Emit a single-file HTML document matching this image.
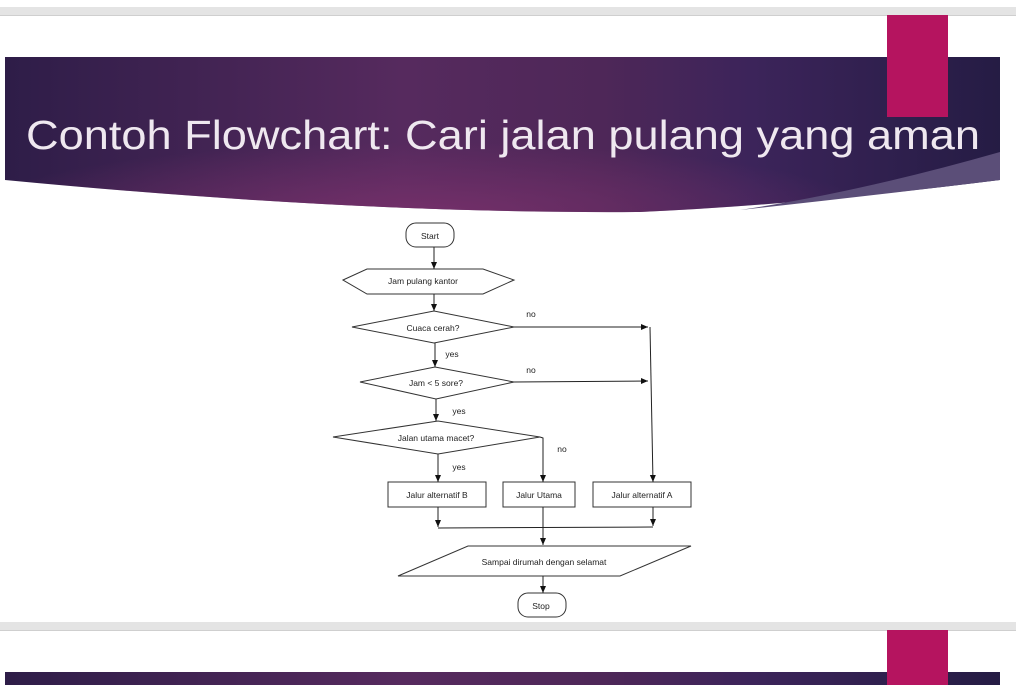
<!DOCTYPE html>
<html><head><meta charset="utf-8"><style>
html,body{margin:0;padding:0;background:#fff;width:1016px;height:685px;overflow:hidden}
svg{display:block}
</style></head><body>
<svg width="1016" height="685" viewBox="0 0 1016 685" xmlns="http://www.w3.org/2000/svg" font-family="'Liberation Sans', sans-serif">
<defs>
<linearGradient id="g1" x1="0" y1="0" x2="1" y2="0">
<stop offset="0" stop-color="#2e1d48"/>
<stop offset="0.4" stop-color="#562a5e"/>
<stop offset="0.6" stop-color="#4e2758"/>
<stop offset="0.75" stop-color="#3c245a"/>
<stop offset="1" stop-color="#251c44"/>
</linearGradient>
<radialGradient id="g2" cx="0.42" cy="1.0" r="0.45">
<stop offset="0" stop-color="#76306a" stop-opacity="0.9"/>
<stop offset="1" stop-color="#76306a" stop-opacity="0"/>
</radialGradient>
<marker id="ar" markerWidth="8" markerHeight="8" refX="7" refY="4" orient="auto" markerUnits="userSpaceOnUse">
<path d="M0,1 L7,4 L0,7 Z" fill="#111"/>
</marker>
</defs>
<rect x="0" y="7" width="1016" height="8" fill="#e4e4e4"/>
<rect x="0" y="15" width="1016" height="1" fill="#cfcfcf"/>
<path d="M5,57 L1000,57 L1000,180 Q800,205 640,212 Q360,214 5,180 Z" fill="url(#g1)"/>
<path d="M5,57 L1000,57 L1000,180 Q800,205 640,212 Q360,214 5,180 Z" fill="url(#g2)"/>
<path d="M1000,152 Q860,192 740,210 Q870,196 1000,180 Z" fill="#5b4e78"/>
<rect x="887" y="15" width="61" height="102" fill="#b5145f"/>
<text x="26" y="149" font-size="41" font-weight="300" fill="#efe8f0" textLength="954" lengthAdjust="spacingAndGlyphs">Contoh Flowchart: Cari jalan pulang yang aman</text>
<g stroke="#333" stroke-width="1" fill="#fff">
<rect x="406" y="223" width="48" height="24" rx="10"/>
<polygon points="343,280 367,269 483,269 514,280 483,294 367,294"/>
<polygon points="352,327 434,311 514,327 434,343"/>
<polygon points="360,382 435,367 514,382 436,399"/>
<polygon points="333,437 438,421 540,437 438,454"/>
<rect x="388" y="482" width="98" height="25"/>
<rect x="503" y="482" width="72" height="25"/>
<rect x="593" y="482" width="98" height="25"/>
<polygon points="468,546 691,546 620,576 398,576"/>
<rect x="518" y="593" width="48" height="24" rx="10"/>
</g>
<g stroke="#222" stroke-width="1" fill="none" marker-end="url(#ar)">
<line x1="434" y1="247" x2="434" y2="269"/>
<line x1="434" y1="294" x2="434" y2="311"/>
<line x1="514" y1="327" x2="648" y2="327"/>
<line x1="514" y1="382" x2="648" y2="381"/>
<line x1="435" y1="343" x2="435" y2="367"/>
<line x1="436" y1="399" x2="436" y2="421"/>
<line x1="650" y1="327" x2="653" y2="482"/>
<line x1="438" y1="454" x2="438" y2="482"/>
<polyline points="540,437 543,438 543,482"/>
<line x1="438" y1="507" x2="438" y2="527"/>
<line x1="653" y1="507" x2="653" y2="526"/>
<line x1="543" y1="507" x2="543" y2="545"/>
<line x1="543" y1="576" x2="543" y2="593"/>
</g>
<line x1="438" y1="528" x2="653" y2="527" stroke="#222"/>
<g font-size="8.5" fill="#222" text-anchor="middle">
<text x="430" y="239">Start</text>
<text x="423" y="284">Jam pulang kantor</text>
<text x="433" y="331">Cuaca cerah?</text>
<text x="436" y="386">Jam &lt; 5 sore?</text>
<text x="436" y="441">Jalan utama macet?</text>
<text x="437" y="498">Jalur alternatif B</text>
<text x="539" y="498">Jalur Utama</text>
<text x="642" y="498">Jalur alternatif A</text>
<text x="544" y="565">Sampai dirumah dengan selamat</text>
<text x="541" y="609">Stop</text>
<text x="531" y="317">no</text>
<text x="531" y="373">no</text>
<text x="562" y="452">no</text>
<text x="452" y="357">yes</text>
<text x="459" y="414">yes</text>
<text x="459" y="470">yes</text>
</g>
<rect x="0" y="622" width="1016" height="8" fill="#e4e4e4"/>
<rect x="0" y="630" width="1016" height="1" fill="#cfcfcf"/>
<rect x="5" y="672" width="995" height="13" fill="url(#g1)"/>
<rect x="887" y="630" width="61" height="55" fill="#b5145f"/>
</svg>
</body></html>
